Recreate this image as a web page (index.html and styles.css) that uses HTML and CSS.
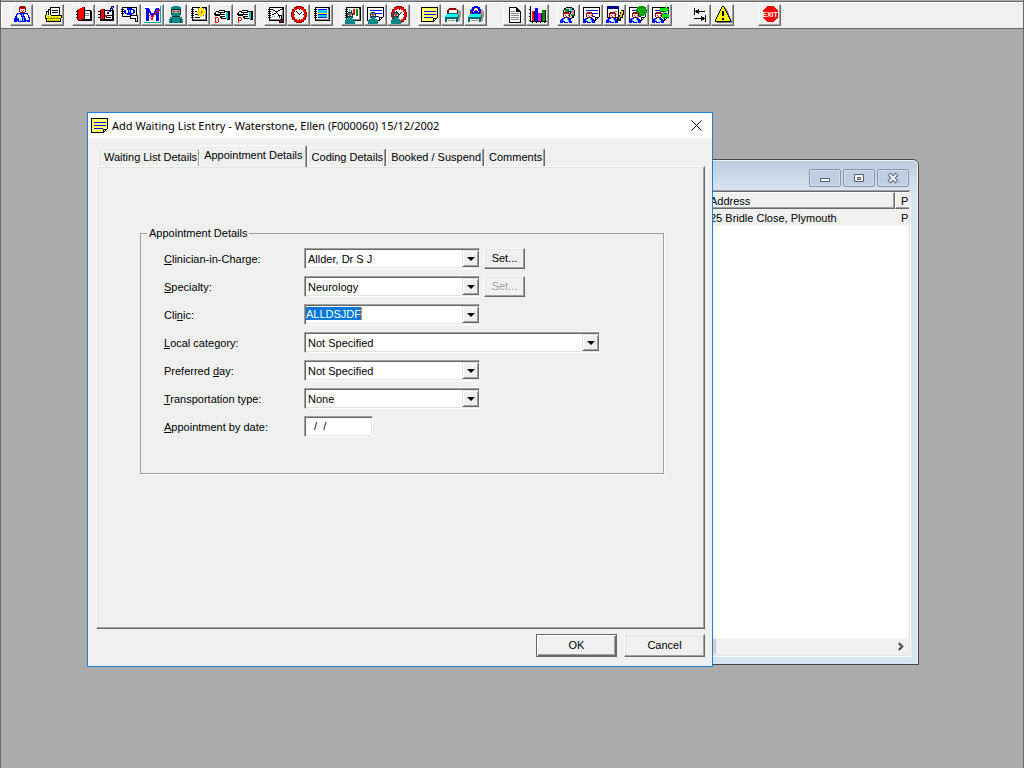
FILE: index.html
```html
<!DOCTYPE html>
<html lang="en">
<head>
<meta charset="utf-8">
<title>Add Waiting List Entry</title>
<link rel="stylesheet" href="styles.css">
</head>
<body>
<svg class="defs" aria-hidden="true">
  <symbol id="note" viewBox="0 0 18 18">
    <path fill="#fff" d="M1 2h15v9l-4 4H1z"/>
    <path fill="#000" d="M0 1h17v1H0zM0 1h1v14H0zM16 1h1v10h-1zM0 14h12v1H0zM15 11h1v1h-1zM14 12h1v1h-1zM13 13h1v1h-1zM12 11h4v1h-4zM12 11h1v4h-1z"/>
    <path fill="#00f" d="M3 4h12v1H3zM3 7h12v1H3zM3 10h9v1H3z"/>
  </symbol>
  <symbol id="ynote" viewBox="0 0 18 18">
    <path fill="#ff6" d="M1 2h15v9l-4 4H1z"/>
    <path fill="#000" d="M0 1h17v1H0zM0 1h1v15H0zM16 1h1v11h-1zM0 15h13v1H0zM15 12h1v1h-1zM14 13h1v1h-1zM13 14h1v1h-1zM12 12h4v1h-4zM12 12h1v4h-1z"/>
    <path fill="#00f" d="M3 5h12v1H3zM3 8h12v1H3zM3 11h9v1H3z"/>
  </symbol>
  <symbol id="book" viewBox="0 0 18 18">
    <path fill="#000" d="M2 1h15v14H2z"/>
    <path fill="#fff" d="M3 2h12v11H3z"/>
    <path fill="#000" d="M1 3h3v1H1zM1 5h3v1H1zM1 7h3v1H1zM1 9h3v1H1zM1 11h3v1H1z"/>
    <path fill="#888" d="M15 3h1v11h-1zM3 13h12v1H3z"/>
  </symbol>
  <symbol id="surgeon" viewBox="0 0 18 18">
    <path fill="#044" d="M4 6h4v1H4zM3 7h6v5H3z"/>
    <path fill="#088" d="M4 7h4v1H4zM4 11h4v2H4zM2 13h8v1h1v4H1v-4h1z"/>
    <path fill="#c44" d="M4 8h4v2H4z"/>
    <path fill="#fff" d="M4 9h1v1H4zM7 9h1v1H7z"/>
  </symbol>
  <symbol id="doctor" viewBox="0 0 18 18">
    <path fill="#800" d="M4 6h5v1h1v4H9v1H4v-1H3V7h1z"/>
    <path fill="#fff" d="M4 8h5v3H4z"/>
    <path fill="#f00" d="M5 7h1v1H5zM7 7h1v1H7zM5 9h1v1H5zM8 9h1v1H8zM6 10h1v1H6z"/>
    <path fill="#00f" d="M2 12h8v1h1v2h1v2H9v-1H8v1H4v-1H3v1H0v-3h1v-1h1z"/>
    <path fill="#fff" d="M5 12h2v2h1v2H5v-1H4v-2h1z"/>
    <path fill="#0cf" d="M3 13h1v2H3zM7 12h1v2H7zM8 14h1v2H8z"/>
  </symbol>
  <symbol id="clock" viewBox="0 0 18 18">
    <path fill="#800" d="M6 0h6v1h2v2h2v3h1v5h-1v3h-2v2h-2v1H6v-1H4v-2H2v-3H1V6h1V3h2V1h2z"/>
    <path fill="#f00" d="M6 1h6v1h2v2h1v2h1v5h-1v2h-1v2h-2v1H6v-1H4v-2H3v-2H2V6h1V4h1V2h2z"/>
    <path fill="#fff" d="M7 3h4v1h2v2h1v5h-1v2h-2v1H7v-1H5v-2H4V6h1V4h2z"/>
    <path fill="#000" d="M9 3h1v1H9zM9 13h1v1H9zM4 8h1v1H4zM13 8h1v1h-1zM6 5h1v1H6zM7 6h1v1H7zM8 7h1v1H8zM9 8h1v1H9zM10 7h1v1h-1zM11 6h1v1h-1z"/>
  </symbol>
  <symbol id="bed" viewBox="0 0 18 18">
    <path fill="#999" d="M13 4h3v1h1v6h-1v4h-2v-2h-1zM4 14h7v1H4z"/>
    <path fill="#800" d="M5 2h7v1h1v1h1v4h-1V4H5v4H3V4h1V3h1z"/>
    <path fill="#fff" d="M5 4h8v4H5z"/>
    <path fill="#0ff" d="M3 8h11v2h-1v1H1v-1h1V9h1z"/>
    <path fill="#066" d="M3 7h10v1H3zM1 11h13v2H1zM1 13h2v3H1zM12 13h2v3h-2zM14 9h1v3h-1z"/>
  </symbol>
  <symbol id="hand" viewBox="0 0 18 18">
    <path fill="#000" d="M3 5h3V4h6v1h5v9h-3v-1H8v-1H7v-2H2V9H1V7h1V6h1z"/>
    <path fill="#fff" d="M6 5h5v1H6zM3 7h4v1H3zM8 7h4v1H8zM4 9h3v0H4zM7 9h5v1H7zM9 11h3v1H9zM3 6h2v1H3z"/>
    <path fill="#0cc" d="M13 6h2v7h-2z"/>
    <path fill="#fff" d="M12 6h1v6h-1z"/>
  </symbol>
</svg>

<header class="toolbar" role="toolbar" aria-label="Main toolbar">
  <div class="group">
    <button class="tool" aria-label="Patient"><svg viewBox="0 0 18 18">
      <path fill="#800" d="M7 0h5v1h1v5h-1v1H7V6H6V1h1z"/><path fill="#fff" d="M7 3h5v3H7z"/>
      <path fill="#f00" d="M7 2h1v1H7zM9 2h1v1H9zM11 2h1v1h-1zM8 4h1v1H8zM10 4h1v1h-1zM9 5h1v1H9z"/>
      <path fill="#00f" d="M4 7h11v2h1v2h1v5h-3v-1h-1v1H5v-1H4v1H1v-4h1v-2h1V8h1z"/>
      <path fill="#fff" d="M5 8h2v1h1v2h1v4H6v-3H5v-1H4V9h1zM11 8h3v1h1v3h1v2h-3v-2h-1v-2h-1z"/>
      <path fill="#0cf" d="M4 11h1v2H4zM10 11h1v4h-1zM9 8h1v2H9zM7 13h1v2H7z"/>
    </svg></button>
  </div>
  <div class="group">
    <button class="tool" aria-label="Card index"><svg viewBox="0 0 18 18">
      <path fill="#000" d="M6 1h10v8h2v3h-1v4H2v-3H1V9h1V5h2V3h2z"/><path fill="#fff" d="M7 2h8v7H7zM5 4h1v5H5zM3 6h1v3H3z"/>
      <path fill="#000" d="M8 4h6v1H8zM8 6h6v1H8z"/><path fill="#ff0" d="M2 9h5v1h10v2h-1v3H3v-3H2z"/>
      <path fill="#880" d="M3 12h13v1H3zM4 14h1v1H4zM6 14h1v1H6zM8 14h1v1H8zM10 14h1v1h-1zM12 14h1v1h-1zM14 14h1v1h-1zM4 10h1v1H4zM7 11h1v1H7zM10 11h1v1h-1zM13 11h1v1h-1z"/>
    </svg></button>
  </div>
  <div class="group">
    <button class="tool" aria-label="Open record"><svg viewBox="0 0 18 18">
      <path fill="#000" d="M2 4h14v1h1v10H3v-1H2z"/><path fill="#fff" d="M9 5h6v8H9z"/><path fill="#888" d="M10 7h4v1h-4zM10 9h4v1h-4z"/>
      <path fill="#f00" d="M3 3h2V2h2V1h2v12H7v1H3z"/><path fill="#000" d="M1 5h2v1H1zM1 8h2v1H1zM1 11h2v1H1zM9 1h1v13H9z"/>
    </svg></button>
    <button class="tool" aria-label="Edit record"><svg viewBox="0 0 18 18">
      <path fill="#000" d="M2 4h14v11H2z"/><path fill="#fff" d="M7 5h7v8H7z"/><path fill="#f00" d="M3 3h3v10H3zM7 9h2v2H7z"/>
      <path fill="#000" d="M8 11h5v1H8zM9 9h5v1H9zM0 5h3v1H0zM0 8h3v1H0zM0 11h3v1H0zM6 3h1v11H6z"/><path fill="#008" d="M13 0h3v2h-1v2h-2v2h-2v2H9V6h2V4h1V2h1z"/><path fill="#8cf" d="M14 1h1v1h-1zM13 3h1v1h-1z"/>
    </svg></button>
    <button class="tool" aria-label="View record"><svg viewBox="0 0 18 18">
      <path fill="#000" d="M1 1h15v10H1z"/><path fill="#fff" d="M2 2h13v8H2z"/><path fill="#000" d="M0 3h3v1H0zM0 5h3v1H0zM0 7h3v1H0zM9 9h8v7h-3v-3H9z"/>
      <path fill="#fff" d="M10 10h6v5h-1v-3h-5z"/><path fill="#00f" d="M6 2h5v1h2v1h1v3h-1v1h-2v1H6V8H4V7H3V4h3z"/><path fill="#fff" d="M5 4h2v3H5zM10 4h2v3h-2z"/><path fill="#0ff" d="M8 4h1v2H8z"/>
    </svg></button>
    <button class="tool" aria-label="Mark"><svg viewBox="0 0 18 18">
      <path fill="#fff" d="M0 0h17v16H0z"/><path fill="#0aa" d="M16 0h1v17H0v-1h16z"/>
      <path fill="#00f" d="M1 2h4v1h1v2h1v2h3V5h1V3h1V2h3v13h-3V7h-1v2h-1v2H7V9H6V7H5v8H2V3H1z"/><path fill="#f00" d="M4 8h1v1h1v2h1v1h1v-2h1V8h2V6h2V4h2V3h1v2h-2v2h-2v2h-2v2H9v3H7v-2H6v-2H5V9H4z"/>
    </svg></button>
    <button class="tool" aria-label="Surgeon"><svg viewBox="0 0 18 18">
      <path fill="#088" d="M6 0h6v1h2v3H4V1h2zM5 7h8v4h2v2h1v4H2v-4h1v-2h2z"/><path fill="#ca8" d="M5 4h8v3H5z"/><path fill="#033" d="M4 3h10v1H4zM4 4h1v5H4zM13 4h1v5h-1zM6 5h2v1H6zM10 5h2v1h-2zM5 10h8v1H5zM4 13h1v4H4zM13 13h1v4h-1z"/>
    </svg></button>
    <button class="tool" aria-label="New entry"><svg viewBox="0 0 18 18">
      <use href="#book"/><path fill="#000" d="M5 5h3v1H5zM5 8h3v1H5zM5 11h5v1H5z"/><path fill="#fd0" d="M10 1h2v2h2v2h2v2h-2v2h-2v2h-2V9H8V7H7V5h1V3h2z"/><path fill="#860" d="M8 2h1v1H8zM13 2h1v1h-1zM8 9h1v1H8zM13 9h1v1h-1zM11 5h1v2h-1z"/><path fill="#fff" d="M10 4h1v1h-1z"/>
    </svg></button>
    <button class="tool" aria-label="Refer D"><svg viewBox="0 0 18 18"><use href="#hand"/><path fill="#f00" fill-rule="evenodd" d="M2 11h3v1h1v4H5v1H2zM3 12v4h2v-4z"/></svg></button>
    <button class="tool" aria-label="Refer P"><svg viewBox="0 0 18 18"><use href="#hand"/><path fill="#f00" fill-rule="evenodd" d="M2 11h3v1h1v2H5v1H3v2H2zM3 12v2h2v-2z"/></svg></button>
  </div>
  <div class="group">
    <button class="tool" aria-label="Write"><svg viewBox="0 0 18 18">
      <use href="#book"/><path fill="#888" d="M5 10h1v1H5zM7 10h1v1H7zM10 10h1v1h-1zM5 6h1v1H5z"/><path fill="#000" d="M4 3h2v1H4zM6 4h2v1H6zM8 5h1v1H8zM9 6h1v1H9zM10 7h1v1h-1zM11 8h1v2h-1zM9 5h2v1H9zM11 4h2v1h-2zM13 3h2v1h-2zM7 7h2v1H7zM5 8h2v1H5zM12 9h3v4h2v4h-5v-3h1v-2h-1z"/><path fill="#fff" d="M13 10h1v3h-1z"/><path fill="#800" d="M13 14h3v2h-3z"/>
    </svg></button>
    <button class="tool" aria-label="Clock"><svg viewBox="0 0 18 18"><use href="#clock"/></svg></button>
    <button class="tool" aria-label="Schedule"><svg viewBox="0 0 18 18"><use href="#book"/><path fill="#00f" d="M5 3h9v1H5z"/><path fill="#0cf" d="M5 4h9v3H5zM5 9h9v2H5z"/><path fill="#fe0" d="M5 7h9v1H5z"/><path fill="#00f" d="M5 8h9v1H5zM5 11h9v1H5z"/></svg></button>
  </div>
  <div class="group">
    <button class="tool" aria-label="Clinic board"><svg viewBox="0 0 18 18"><use href="#book"/><path fill="#0cc" d="M5 3h1v3H5z"/><path fill="#800" d="M7 4h1v3H7z"/><path fill="#f00" d="M9 3h2v6H9z"/><path fill="#080" d="M12 3h2v7h-2z"/><use href="#surgeon"/></svg></button>
    <button class="tool" aria-label="Clinic note"><svg viewBox="0 0 18 18"><use href="#note"/><use href="#surgeon"/></svg></button>
    <button class="tool" aria-label="Clinic times"><svg viewBox="0 0 18 18"><use href="#clock"/><use href="#surgeon"/></svg></button>
  </div>
  <div class="group">
    <button class="tool" aria-label="Waiting list"><svg viewBox="0 0 18 18"><use href="#ynote"/></svg></button>
    <button class="tool" aria-label="Bed"><svg viewBox="0 0 18 18"><use href="#bed"/></svg></button>
    <button class="tool" aria-label="Admit"><svg viewBox="0 0 18 18"><use href="#bed"/><path fill="#00f" d="M7 0h4v1h2v2h1v4h-1v1h-2V7H7v1H5V7H4V3h1V1h2z"/><path fill="#fff" d="M7 2h4v3H7zM6 5h1v1H6zM11 5h1v1h-1z"/><path fill="#f00" d="M7 2h1v1H7zM10 2h1v1h-1zM8 4h2v1H8zM4 6h1v2H4zM13 6h1v2h-1z"/></svg></button>
  </div>
  <div class="group far">
    <button class="tool" aria-label="Document"><svg viewBox="0 0 18 18"><path fill="#000" d="M3 1h8v1h1v1h1v1h1v1h1v12H3z"/><path fill="#fff" d="M4 2h6v4h4v10H4z"/><path fill="#888" d="M5 5h4v1H5zM5 7h8v1H5zM5 9h8v1H5zM5 11h8v1H5zM5 13h8v1H5z"/><path fill="#000" d="M10 2h1v3h3v1h-4z"/></svg></button>
    <button class="tool" aria-label="Statistics"><svg viewBox="0 0 18 18"><path fill="#000" d="M1 0h1v15h16v1h-2v1h-1v-1h-3v1h-1v-1H8v1H7v-1H4v1H3v-1H1v-1H0v-1h1v-3H0v-1h1V8H0V7h1V4H0V3h1z"/><path fill="#f00" d="M3 5h3v10H3z"/><path fill="#00f" d="M6 2h3v13H6z"/><path fill="#f0f" d="M9 7h3v8H9z"/><path fill="#080" d="M13 4h3v11h-3z"/><path fill="#000" d="M12 7h1v8h-1zM16 4h1v11h-1zM5 5h1v10H5z"/></svg></button>
  </div>
  <div class="group">
    <button class="tool" aria-label="Patient disc"><svg viewBox="0 0 18 18"><path fill="#000" d="M6 1h6v1h2v2h1v6h-1v2h-2v1H6v-1H4v-2H3V4h1V2h2z"/><path fill="#ccc" d="M6 2h6v2h2v6h-2v2H6v-2H4V4h2z"/><path fill="#080" d="M5 3h4v3H5zM11 8h3v2h-3z"/><path fill="#0cc" d="M10 2h2v3h-2z"/><path fill="#c6c" d="M11 5h3v2h-3z"/><path fill="#000" d="M8 5h3v3H8z"/><path fill="#fff" d="M9 6h1v1H9z"/><use href="#doctor"/></svg></button>
    <button class="tool" aria-label="Patient note"><svg viewBox="0 0 18 18"><use href="#note"/><use href="#doctor"/></svg></button>
    <button class="tool" aria-label="Edit patient note"><svg viewBox="0 0 18 18"><path fill="#000" d="M1 0h12v12H1z"/><path fill="#fff" d="M2 3h10v8H2z"/><path fill="#008" d="M1 0h12v3H1z"/><path fill="#888" d="M8 5h3v1H8zM8 8h3v1H8z"/><path fill="#000" d="M15 4h3v5h-1v3h-2v3h-4v-3h2V9h1V6h1z"/><path fill="#fc0" d="M15 5h2v3h-1v3h-2v2h-1v-2h1V8h1z"/><use href="#doctor"/></svg></button>
    <button class="tool" aria-label="Patient region"><svg viewBox="0 0 18 18"><use href="#note"/><path fill="#090" d="M10 0h5v1h2v2h1v4h-1v2h-2v1h-5V9H8V7H7V3h1V1h2z"/><path fill="#0e0" d="M9 3h1v1H9zM11 3h1v1h-1zM13 3h1v1h-1zM15 3h1v1h-1zM10 5h1v1h-1zM12 5h1v1h-1zM14 5h1v1h-1zM11 7h1v1h-1zM13 7h1v1h-1z"/><use href="#doctor"/></svg></button>
    <button class="tool" aria-label="Transfer patient"><svg viewBox="0 0 18 18"><use href="#note"/><path fill="#0d0" d="M8 2h5V0h1v1h1v1h1v1h1v1h-1v1h-1v1h-1v1h-1V5H8zM17 8h-5V6h-1v1h-1v1H9v1H8v1h1v1h1v1h1v1h1v-2h5z"/><path fill="#050" d="M8 5h5v1H8zM12 11h5v1h-5z"/><use href="#doctor"/></svg></button>
  </div>
  <div class="group far">
    <button class="tool" aria-label="Switch"><svg viewBox="0 0 18 18"><path fill="#000" d="M3 2h1v7H3zM4 5h10v1H4zM5 4h2v3H5zM7 3h1v5H7zM14 9h1v7h-1zM3 12h11v1H3zM11 11h2v3h-2zM10 10h1v5h-1z"/></svg></button>
    <button class="tool" aria-label="Alerts"><svg viewBox="0 0 18 18"><path fill="#777" d="M10 2h2l6 13v2H3v-1h13z"/><path fill="#000" d="M8 0h2v1h1v2h1v2h1v2h1v2h1v2h1v2h1v3H1v-3h1v-2h1V9h1V7h1V5h1V3h1V1h1z"/><path fill="#ff0" d="M8 1h2v2h1v2h1v2h1v2h1v2h1v2h1v2H2v-2h1v-2h1V9h1V7h1V5h1V3h1z"/><path fill="#000" d="M8 5h2v5H8zM8 12h2v2H8z"/></svg></button>
  </div>
  <div class="group farther">
    <button class="tool" aria-label="Exit"><svg viewBox="0 0 18 18"><path fill="#f00" d="M6 0h7v1h1v1h1v1h1v1h1v8h-1v1h-1v1h-1v1h-1v1H6v-1H5v-1H4v-1H3v-1H2V4h1V3h1V2h1V1h1z"/><text x="9" y="11" class="exit-text">EXIT</text></svg></button>
  </div>
</header>

<main class="workspace">
  <section class="child-window" aria-label="Patient list">
    <div class="child-title">
      <button class="caption" aria-label="Minimise"><svg viewBox="0 0 14 12"><path d="M2.500 6.500h9v3h-9z" fill="#fff" stroke="#566078"/></svg></button>
      <button class="caption" aria-label="Maximise"><svg viewBox="0 0 14 12"><path d="M2.500 2.500h9v7h-9z" fill="#fff" stroke="#566078"/><path d="M5.500 5.500h3v2h-3z" fill="#bccbdd" stroke="#566078"/></svg></button>
      <button class="caption" aria-label="Close list"><svg viewBox="0 0 14 12"><path d="M3 2l8 8M11 2l-8 8" stroke="#566078" stroke-width="4"/><path d="M3.500 2.500l7 7M10.500 2.500l-7 7" stroke="#fff" stroke-width="2"/></svg></button>
    </div>
    <div class="child-client">
      <table class="list">
        <thead><tr><th>Address</th><th class="col-p">P</th></tr></thead>
        <tbody><tr><td>25 Bridle Close, Plymouth</td><td class="col-p">P</td></tr></tbody>
      </table>
      <div class="scroll">
        <span class="thumb"></span>
        <svg class="chev" viewBox="0 0 8 8"><path d="M2.500 1l3 3-3 3" fill="none" stroke="#555" stroke-width="2"/></svg>
      </div>
    </div>
  </section>

  <form class="dialog" role="dialog" aria-labelledby="dlg-title" onsubmit="return false">
    <div class="dialog-title">
      <svg class="title-icon" viewBox="0 0 18 18"><use href="#ynote"/></svg>
      <h1 id="dlg-title">Add Waiting List Entry - Waterstone, Ellen (F000060) 15/12/2002</h1>
      <button type="button" class="close" aria-label="Close"><svg viewBox="0 0 11 11"><path d="M.5.5l10 10M10.500.5l-10 10" stroke="#000" fill="none"/></svg></button>
    </div>
    <div class="dialog-body">
      <div class="tabs" role="tablist">
        <button type="button" class="tab" role="tab">Waiting List Details</button>
        <button type="button" class="tab active" role="tab" aria-selected="true">Appointment Details</button>
        <button type="button" class="tab" role="tab">Coding Details</button>
        <button type="button" class="tab" role="tab">Booked / Suspend</button>
        <button type="button" class="tab" role="tab">Comments</button>
      </div>
      <div class="page" role="tabpanel">
        <fieldset class="details">
          <legend>Appointment Details</legend>
          <div class="row">
            <label for="clinician"><u>C</u>linician-in-Charge:</label>
            <span class="combo"><select id="clinician"><option>Allder, Dr S J</option></select><span class="arrow"></span></span>
            <button type="button" class="set">Set...</button>
          </div>
          <div class="row">
            <label for="specialty"><u>S</u>pecialty:</label>
            <span class="combo"><select id="specialty"><option>Neurology</option></select><span class="arrow"></span></span>
            <button type="button" class="set" disabled>Set...</button>
          </div>
          <div class="row">
            <label for="clinic">Cli<u>n</u>ic:</label>
            <span class="combo"><input id="clinic" type="text" value="ALLDSJDF"><span class="arrow"></span></span>
          </div>
          <div class="row">
            <label for="category"><u>L</u>ocal category:</label>
            <span class="combo wide"><select id="category"><option>Not Specified</option></select><span class="arrow"></span></span>
          </div>
          <div class="row">
            <label for="day">Preferred <u>d</u>ay:</label>
            <span class="combo"><select id="day"><option>Not Specified</option></select><span class="arrow"></span></span>
          </div>
          <div class="row">
            <label for="transport"><u>T</u>ransportation type:</label>
            <span class="combo"><select id="transport"><option>None</option></select><span class="arrow"></span></span>
          </div>
          <div class="row">
            <label for="bydate"><u>A</u>ppointment by date:</label>
            <input class="date" id="bydate" type="text" value="  /  /">
          </div>
        </fieldset>
      </div>
      <div class="actions">
        <button class="push default">OK</button>
        <button type="button" class="push">Cancel</button>
      </div>
    </div>
  </form>
</main>
<script src="script.js"></script>
</body>
</html>
```
FILE: styles.css
```css
* { box-sizing: border-box; }

body {
  margin: 0;
  min-height: 100vh;
  display: flex;
  flex-direction: column;
  background: #ababab;
  border-left: 1px solid #696969;
  border-right: 1px solid #696969;
  font: 11px/14px "Liberation Sans", Arial, sans-serif;
  color: #000;
}

button, input, select { font: inherit; color: inherit; margin: 0; padding: 0; border-radius: 0; }

.defs { position: absolute; width: 0; height: 0; }

/* Toolbar */
.toolbar {
  display: flex;
  gap: 8px;
  margin-top: 1px;
  padding: 2px 9px;
  background: #f0f0f0;
  border: 1px solid #696969;
  border-width: 1px 0;
  box-shadow: inset 1px 1px #fff;
}
.group { display: flex; }
.far { margin-left: 8px; }
.farther { margin-left: 16px; }
.tool {
  width: 23px;
  height: 22px;
  padding: 1px 1px 1px 2px;
  background: #f0f0f0;
  border: 1px solid;
  border-color: #fff #696969 #696969 #fff;
  box-shadow: inset -1px -1px #a0a0a0;
}
.tool svg { display: block; width: 18px; height: 18px; shape-rendering: crispEdges; }
.exit-text { font: bold 7px "Liberation Sans", sans-serif; fill: #fff; text-anchor: middle; }

/* Workspace */
.workspace { position: relative; flex: 1; }

.child-window {
  position: absolute;
  left: 695px;
  top: 130px;
  width: 223px;
  height: 506px;
  display: flex;
  flex-direction: column;
  padding: 0 7px 7px;
  background: #d7e4f2;
  border: 1px solid #46484c;
  border-radius: 6px 6px 0 0;
  box-shadow: inset -1px 1px #eef4fb;
}
.child-title {
  display: flex;
  justify-content: flex-end;
  gap: 2px;
  margin: 1px -6px 0;
  padding: 8px 8px 3px;
  background: linear-gradient(#bdcbdc, #d7e4f2);
  border-radius: 5px 5px 0 0;
}
.caption {
  display: grid;
  place-items: center;
  width: 32px;
  height: 18px;
  background: #bfcee0;
  border: 1px solid #8393ac;
  border-radius: 2px;
  box-shadow: inset 0 0 0 1px #d5e0ed;
}
.caption svg { width: 14px; height: 12px; }
.child-client {
  flex: 1;
  display: flex;
  flex-direction: column;
  background: #fff;
  border: 1px solid;
  border-color: #a0a0a0 #fff #fff #a0a0a0;
  box-shadow: inset -1px -1px #e3e3e3, inset 0 1px #696969;
  padding: 1px 1px 1px 0;
}
.list { width: 100%; border-collapse: separate; border-spacing: 0; }
.list th, .list td { height: 17px; padding: 1px 4px 0 5px; text-align: left; font-weight: normal; white-space: nowrap; background: #f0f0f0; }
.list th { border: 1px solid; border-color: #fff #696969 #696969 #fff; padding: 0 4px; box-shadow: inset -1px -1px #a0a0a0; }
.list .col-p { width: 14px; padding: 0 0 0 6px; border-right: 0; }
.list th.col-p { padding-left: 5px; box-shadow: inset 0 -1px #a0a0a0; }
.scroll { display: flex; align-items: center; justify-content: space-between; height: 17px; margin-top: auto; background: #f0f0f0; padding-right: 4px; }
.thumb { width: 11px; height: 15px; background: #cdcdcd; }
.chev { width: 9px; height: 9px; }

/* Dialog */
.dialog {
  position: absolute;
  left: 86px;
  top: 83px;
  width: 626px;
  background: #f0f0f0;
  border: 1px solid #1883d7;
}
.dialog-title { display: flex; align-items: center; gap: 3px; height: 25px; padding: 0 10px 0 3px; background: #fff; }
.title-icon { width: 18px; height: 18px; shape-rendering: crispEdges; }
.dialog-title h1 { flex: 1; margin: 0; font: 11px/16px "Noto Sans", "Open Sans", sans-serif; white-space: nowrap; }
.close { display: grid; place-items: center; width: 11px; height: 11px; background: none; border: 0; }
.close svg { width: 11px; height: 11px; }
.dialog-body { padding: 7px 7px 9px 8px; }

.tabs { display: flex; align-items: flex-end; gap: 1px; padding-left: 2px; height: 21px; }
.tab {
  height: 18px;
  padding: 0 2px 1px 3px;
  background: #f0f0f0;
  border: 1px solid;
  border-color: #fff #696969 transparent #fff;
  border-bottom: 0;
  border-radius: 2px 2px 0 0;
  box-shadow: inset -1px 0 #a0a0a0, inset 1px 1px #e3e3e3;
  white-space: nowrap;
}
.tab:first-child { padding-left: 5px; }
.tab.active { height: 22px; margin: 0 0 -1px -2px; padding: 0 3px 3px 4px; z-index: 1; box-shadow: inset -1px 0 #a0a0a0; }
.page {
  min-height: 463px;
  padding: 59px 40px 0 43px;
  border: 1px solid;
  border-color: #fff #696969 #696969 #fff;
  box-shadow: inset -1px -1px #a0a0a0, inset 1px 1px #e3e3e3;
}

.details {
  display: flex;
  flex-direction: column;
  gap: 7px;
  min-width: 0;
  min-height: 248px;
  margin: 0;
  padding: 8px 22px 0 23px;
  border: 1px solid #a0a0a0;
  box-shadow: 1px 1px #fff;
}
.details legend { margin-left: -17px; padding: 0 2px; }
.row { display: flex; height: 21px; align-items: flex-start; }
.row label { width: 140px; padding-top: 4px; }
u { text-underline-offset: 1px; }

.combo, .date {
  background: #fff;
  border: 1px solid;
  border-color: #a0a0a0 #fff #fff #a0a0a0;
  box-shadow: inset 1px 1px #696969, inset -1px -1px #e3e3e3;
}
.combo { display: flex; width: 176px; height: 21px; padding: 1px 0 1px 1px; }
.combo.wide { width: 296px; }
.combo select { flex: 1; min-width: 0; padding: 1px 0 0 2px; appearance: none; background: none; border: 0; outline: 0; }
.combo input { field-sizing: content; height: 13px; margin: 1px auto 0 0; padding: 0; background: none; border: 0; border-right: 1px solid #ff8c28; outline: 0; }
.combo input::selection { background: #0078d7; color: #fff; }
.arrow {
  display: grid;
  place-items: center;
  width: 17px;
  background: #f0f0f0;
  border: 1px solid;
  border-color: #e3e3e3 #696969 #696969 #e3e3e3;
  box-shadow: inset 1px 1px #fff, inset -1px -1px #a0a0a0;
  pointer-events: none;
}
.arrow::before { content: ""; border: 4px solid transparent; border-top-color: #000; border-bottom: 0; }
.date { width: 69px; height: 21px; padding: 0 3px 2px; white-space: pre; }

.set, .push {
  padding-bottom: 2px;
  background: #f0f0f0;
  border: 1px solid;
  border-color: #fff #696969 #696969 #fff;
  box-shadow: inset -1px -1px #a0a0a0, inset 1px 1px #e3e3e3;
}
.set { width: 41px; height: 21px; margin-left: 4px; }
.set:disabled { color: #a0a0a0; text-shadow: 1px 1px #fff; }

.actions { display: flex; justify-content: flex-end; gap: 7px; padding-top: 5px; }
.push { width: 81px; height: 23px; }
.push.default { outline: 1px solid #696969; outline-offset: -1px; border-color: #696969; box-shadow: inset 1px 1px #fff, inset -1px -1px #696969, inset -2px -2px #a0a0a0; }
```
FILE: script.js
```js
const clinic = document.getElementById("clinic");
clinic.focus();
clinic.select();
```
